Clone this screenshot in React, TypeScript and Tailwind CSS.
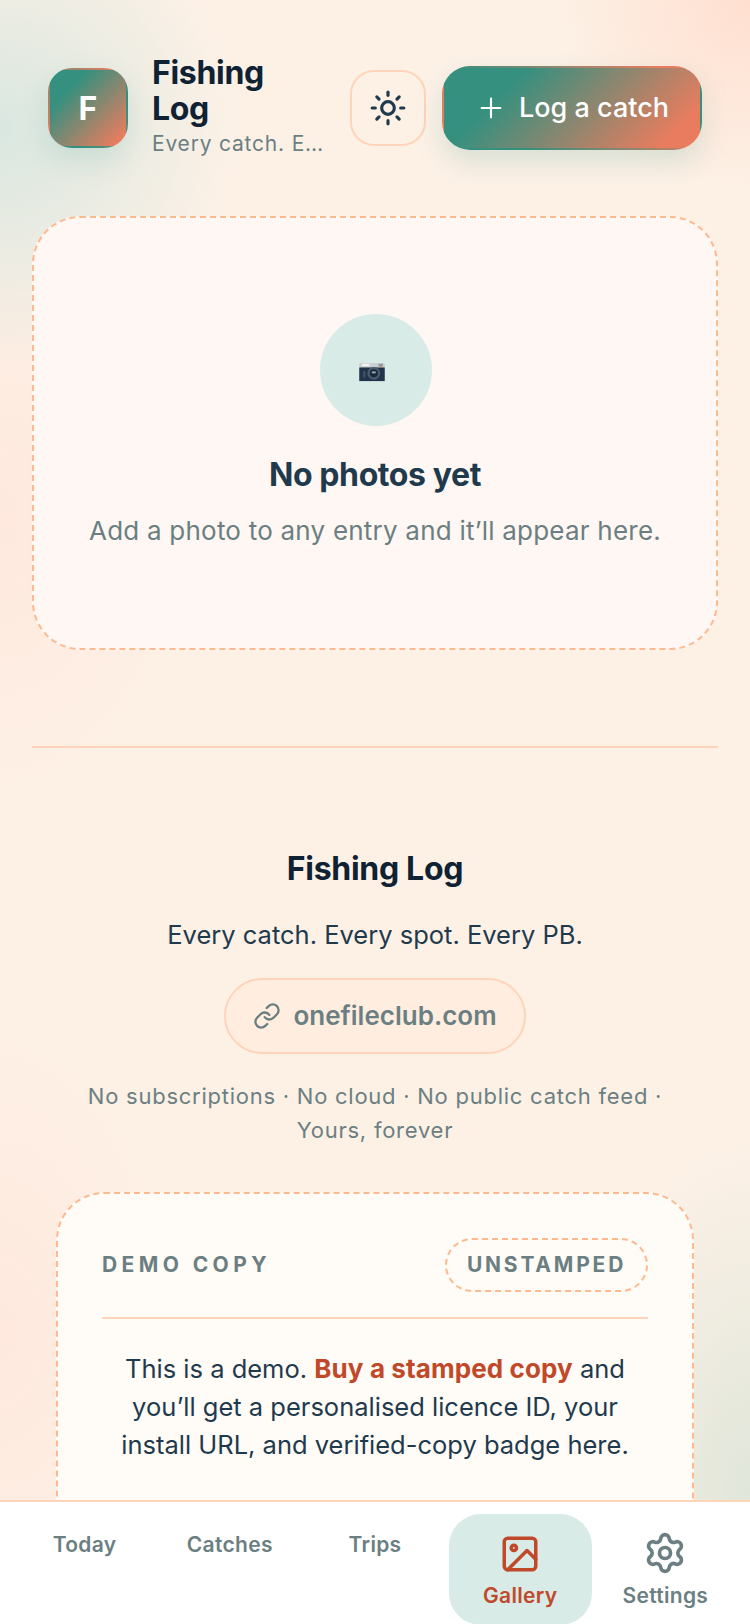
import { Link, Plus, Settings, Sun } from "lucide-react";

const tabs = ["Today", "Catches", "Trips"];

function CameraIcon() {
  return (
    <svg width="28" height="20" viewBox="0 0 30 22" className="mt-[4px] mr-[8px]">
      <rect x="1" y="1" width="28" height="20" rx="1.5" fill="#c9d0d2" />
      <rect x="1" y="6" width="28" height="15" fill="#22344a" />
      <rect x="4" y="2" width="8" height="2.5" fill="#f4f6f6" />
      <rect x="22" y="2" width="5" height="3" fill="#8d9aa0" />
      <circle cx="25" cy="5" r="1" fill="#e8823c" />
      <circle cx="17" cy="12.5" r="7" fill="#4a5c70" />
      <circle cx="17" cy="12.5" r="4.5" fill="#1b2a3b" />
      <ellipse cx="17" cy="11.5" rx="2.5" ry="1.2" fill="#8fa3b3" />
      <rect x="5" y="10" width="3" height="7" fill="#3b4f63" />
    </svg>
  );
}

function GalleryIcon() {
  return (
    <svg width="42" height="42" viewBox="0 0 24 24" fill="none" stroke="#c0492a" strokeWidth="2" strokeLinecap="round" strokeLinejoin="round">
      <rect x="3" y="3" width="18" height="18" rx="2" />
      <circle cx="8.5" cy="8.5" r="1.5" />
      <polyline points="21 15 16 10 5 21" />
    </svg>
  );
}

export default function App() {
  return (
    <div className="h-[1624px] w-[750px] overflow-hidden flex flex-col font-['Inter',sans-serif] bg-[#fdf1e6] bg-[radial-gradient(circle_at_0%_8%,#d9e7e0_0,transparent_240px),radial-gradient(circle_at_100%_0%,#ffdfd0_0,transparent_200px),radial-gradient(ellipse_at_0%_32%,#ffe9de_0,transparent_220px),radial-gradient(ellipse_at_0%_82%,#ffe9de_0,transparent_200px),radial-gradient(ellipse_at_100%_92%,#e0e6da_0,transparent_180px)]">
      <main className="flex-1 min-h-0 overflow-hidden px-8">
        {/* Header */}
        <header className="flex items-center gap-6 px-4 pt-[58px] mb-[58px]">
          <div className="w-20 h-20 shrink-0 rounded-3xl border-2 border-transparent bg-[linear-gradient(135deg,#35907f_25%,#e97c5e_92%)] shadow-[0_12px_28px_rgba(42,145,135,0.16)] flex items-center justify-center text-white font-bold text-[32px]">
            <span className="mt-[2px]">F</span>
          </div>
          <div className="flex-1 min-w-0 -mt-[3px]">
            <h1 className="text-[32px] leading-[36px] font-bold text-[#0f2233] tracking-[-0.3px]">Fishing Log</h1>
            <p className="mt-[3px] text-[21px] leading-[28px] tracking-[0.8px] text-[#6b7f82] truncate">Every catch. Every spot. Every PB.</p>
          </div>
          <div className="flex items-center gap-4 shrink-0">
            <button className="w-[76px] h-[76px] rounded-3xl border-2 border-[#ffd4b8] flex items-center justify-center text-[#1f3a4d]">
              <Sun size={38} strokeWidth={2} />
            </button>
            <button className="w-[260px] h-[84px] rounded-[28px] border-2 border-transparent bg-[linear-gradient(135deg,#35907f_25%,#e97c5e_88%)] shadow-[0_12px_28px_rgba(42,145,135,0.18)] flex items-center justify-center gap-3 text-white text-[27px] font-medium">
              <Plus size={32} strokeWidth={1.6} />
              Log a catch
            </button>
          </div>
        </header>

        {/* Empty gallery */}
        <section className="h-[434px] rounded-[48px] border-2 border-dashed border-[#ffb98f] bg-[#fff7f3] flex flex-col items-center pt-[96px]">
          <div className="ml-[2px] w-28 h-28 rounded-full bg-[#d8ebe7] flex items-center justify-center">
            <CameraIcon />
          </div>
          <h2 className="mt-[29px] text-[32px] leading-[40px] font-bold tracking-[-0.4px] text-[#1f3a4d]">No photos yet</h2>
          <p className="mt-[16px] text-[26px] leading-[40px] tracking-[0.22px] text-[#6b7f82]">Add a photo to any entry and it’ll appear here.</p>
        </section>

        <div className="mt-[96px] h-[2px] bg-[#ffd4b8]" />

        {/* About */}
        <section className="mt-[101px] flex flex-col items-center text-center">
          <h3 className="text-[32px] leading-[40px] font-bold tracking-[-0.3px] text-[#0f2233]">Fishing Log</h3>
          <p className="mt-[26px] text-[25.5px] leading-[40px] text-[#1f3a4d]">Every catch. Every spot. Every PB.</p>
          <div className="mt-[23px] w-[302px] h-[76px] rounded-full border-2 border-[#ffd4b8] bg-[#ffeee0] flex items-center justify-center gap-3 text-[#6b7f82]">
            <Link size={28} strokeWidth={2} />
            <span className="text-[26px] leading-[34px] font-semibold -mt-[1px]">onefileclub.com</span>
          </div>
          <p className="mt-[25px] w-[600px] text-[22px] leading-[34px] tracking-[0.75px] text-[#6b7f82]">
            No subscriptions · No cloud · No public catch feed · Yours, forever
          </p>
        </section>

        {/* Licence card */}
        <section className="mt-[45px] mx-6 h-[420px] rounded-[48px] border-2 border-dashed border-[#ffb98f] bg-[#fffbf7] px-[44px] pt-[44px]">
          <div className="flex items-center justify-between pb-[25px] border-b-2 border-[#ffd4b8]">
            <span className="text-[21px] font-bold tracking-[4.4px] text-[#6b7f82]">DEMO COPY</span>
            <span className="h-[54px] w-[203px] rounded-full border-2 border-dashed border-[#ffb98f] flex items-center justify-center text-[21px] font-bold tracking-[2.8px] text-[#6b7f82]">UNSTAMPED</span>
          </div>
          <p className="mt-[31px] text-center text-[25.5px] leading-[38px] text-[#1f3a4d]">
            This is a demo. <span className="font-bold text-[26px] tracking-[0.1px] text-[#c0492a]">Buy a stamped copy</span> and you’ll get a personalised licence ID, your install URL, and verified-copy badge here.
          </p>
        </section>
      </main>

      {/* Bottom nav */}
      <nav className="h-[124px] shrink-0 bg-white border-t-2 border-[#ffd4b8] grid grid-cols-5 px-3 pt-[12px] text-[21px] tracking-[0.3px] font-semibold text-[#6b7f82]">
        {tabs.map((t) => (
          <div key={t} className="flex justify-center pt-[16px] leading-[30px]">{t}</div>
        ))}
        <div className="justify-self-center w-[143px] h-[111px] rounded-[32px] bg-[#d8ebe7] flex flex-col items-center text-[#c0492a] pt-[19px]">
          <GalleryIcon />
          <span className="mt-[6px] leading-[30px]">Gallery</span>
        </div>
        <div className="flex flex-col items-center pt-[17px]">
          <Settings size={44} strokeWidth={2} />
          <span className="mt-[6px] leading-[30px]">Settings</span>
        </div>
      </nav>
    </div>
  );
}
